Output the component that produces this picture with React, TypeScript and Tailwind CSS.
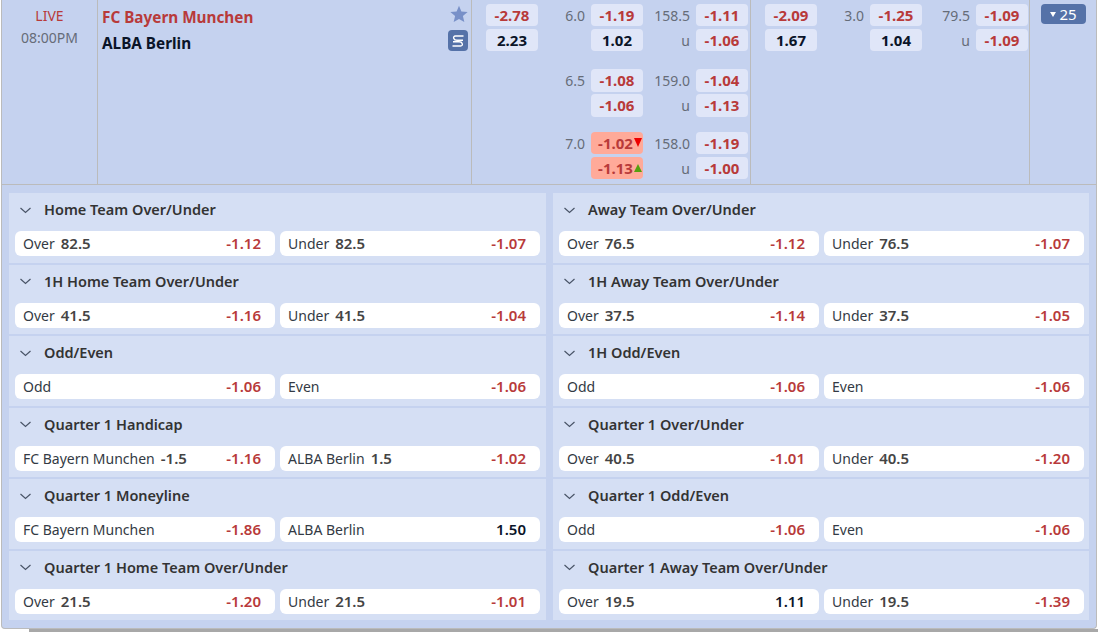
import React from 'react';

function Odd({ v, hot, arrow, tall }: { v: string; hot?: boolean; arrow?: 'up' | 'down'; tall?: boolean }) {
  const neg = v.startsWith('-');
  return (
    <div
      className={`relative flex ${tall ? 'h-[23px]' : 'h-[22px]'} w-[52px] items-center justify-center rounded-[4px] text-[15px] font-bold ${hot ? 'bg-[#ffaa99]' : 'bg-[#e0e6f8]'} ${neg ? 'text-[#b83a3a]' : 'text-[#0a1428]'}`}
    >
      {arrow ? <span className="mr-[3px]">{v}</span> : v}
      {arrow === 'down' && (
        <span className="absolute right-[1px] top-[6px] h-0 w-0 border-x-[4px] border-t-[9px] border-x-transparent border-t-[#ee0000]" />
      )}
      {arrow === 'up' && (
        <span className="absolute right-[1px] top-[7px] h-0 w-0 border-x-[4px] border-b-[8px] border-x-transparent border-b-[#55a010]" />
      )}
    </div>
  );
}

function Line({ label, children, w }: { label: string; children: React.ReactNode; w: string }) {
  return (
    <div className="flex items-center">
      <span className={`${w} pr-[6px] text-right text-[14px] text-[#666c78]`}>{label}</span>
      {children}
    </div>
  );
}

function Pill({ name, line, odd }: { name: string; line?: string; odd: string }) {
  const neg = odd.startsWith('-');
  return (
    <div className="flex h-[25px] flex-1 items-center justify-between rounded-[6px] bg-white pl-[8px] pr-[14px] text-[14px]">
      <span className="text-[#333a44]">
        {name}
        {line && <b className="ml-[6px] text-[15px] font-semibold text-[#444]">{line}</b>}
      </span>
      <span className={`text-[15px] font-semibold ${neg ? 'text-[#b83a3a]' : 'text-[#0a1428]'}`}>{odd}</span>
    </div>
  );
}

type P = [string, string | undefined, string];

function Card({ title, a, b, inset }: { title: string; a: P; b: P; inset?: boolean }) {
  return (
    <div className={`h-[69.5px] bg-[#d5dff4] pl-[6px] ${inset ? 'pr-[6px]' : 'pr-[5px]'}`}>
      <div className="flex h-[38px] items-center pb-[4px] pl-[5px] text-[14.5px] font-semibold text-[#333]">
        <svg width="11" height="7" viewBox="0 0 11 7" className="mr-[13px]" fill="none" stroke="#4a5568" strokeWidth="1.2">
          <path d="M.5 1 L5.500 5.500 L10.500 1" />
        </svg>
        {title}
      </div>
      <div className="flex gap-[5px]">
        <Pill name={a[0]} line={a[1]} odd={a[2]} />
        <Pill name={b[0]} line={b[1]} odd={b[2]} />
      </div>
    </div>
  );
}

const left: { t: string; a: P; b: P }[] = [
  { t: 'Home Team Over/Under', a: ['Over', '82.5', '-1.12'], b: ['Under', '82.5', '-1.07'] },
  { t: '1H Home Team Over/Under', a: ['Over', '41.5', '-1.16'], b: ['Under', '41.5', '-1.04'] },
  { t: 'Odd/Even', a: ['Odd', undefined, '-1.06'], b: ['Even', undefined, '-1.06'] },
  { t: 'Quarter 1 Handicap', a: ['FC Bayern Munchen', '-1.5', '-1.16'], b: ['ALBA Berlin', '1.5', '-1.02'] },
  { t: 'Quarter 1 Moneyline', a: ['FC Bayern Munchen', undefined, '-1.86'], b: ['ALBA Berlin', undefined, '1.50'] },
  { t: 'Quarter 1 Home Team Over/Under', a: ['Over', '21.5', '-1.20'], b: ['Under', '21.5', '-1.01'] },
];
const right: { t: string; a: P; b: P }[] = [
  { t: 'Away Team Over/Under', a: ['Over', '76.5', '-1.12'], b: ['Under', '76.5', '-1.07'] },
  { t: '1H Away Team Over/Under', a: ['Over', '37.5', '-1.14'], b: ['Under', '37.5', '-1.05'] },
  { t: '1H Odd/Even', a: ['Odd', undefined, '-1.06'], b: ['Even', undefined, '-1.06'] },
  { t: 'Quarter 1 Over/Under', a: ['Over', '40.5', '-1.01'], b: ['Under', '40.5', '-1.20'] },
  { t: 'Quarter 1 Odd/Even', a: ['Odd', undefined, '-1.06'], b: ['Even', undefined, '-1.06'] },
  { t: 'Quarter 1 Away Team Over/Under', a: ['Over', '19.5', '1.11'], b: ['Under', '19.5', '-1.39'] },
];

export default function App() {
  return (
    <div className="h-[632px] w-[1098px] overflow-hidden bg-white font-['Noto_Sans',sans-serif]">
      <div className="ml-[1px] h-[629px] w-[1096px] rounded-b-[4px] border-x border-b border-[#bbbbbb] bg-[#c5d2ef]">
        {/* main market row */}
        <div className="flex h-[185px] border-b border-[#bbbbbb]">
          <div className="w-[96px] border-r border-[#bbbbbb] pt-[5px] text-center text-[14px] leading-[22px]">
            <div className="text-[#b83a3a]">LIVE</div>
            <div className="text-[#666c78]">08:00PM</div>
          </div>
          <div className="relative w-[374px] border-r border-[#bbbbbb] pl-[4px] pt-[4px] text-[15.3px] font-bold leading-[26px]">
            <div className="text-[#b83a3a]">FC Bayern Munchen</div>
            <div className="text-[#0a1428]">ALBA Berlin</div>
            <svg className="absolute right-[3px] top-[5px]" width="18" height="18" viewBox="0 0 24 24" fill="#7890c8">
              <path d="M12 1l3.2 7.6 8.3.7-6.3 5.4 1.9 8.1L12 18.5l-7.100 4.300 1.900-8.100L.5 9.300l8.300-.7z" />
            </svg>
            <div className="absolute right-[3px] top-[30px] flex h-[21px] w-[20px] items-center justify-center rounded-[4px] bg-[#5572a8]">
              <svg width="14" height="14" viewBox="0 0 14 14" fill="none" stroke="#fff" strokeWidth="1.400">
                <path d="M12.500 2H4.500C2.800 2 2.300 3.200 2.800 4.500C3.200 5.800 4.500 6.200 6 6.200H12" />
                <path d="M1.500 12H9.500C11.200 12 11.700 10.800 11.200 9.500C10.800 8.200 9.500 7.800 8 7.800H2" />
              </svg>
            </div>
          </div>

          {/* full time */}
          <div className="flex w-[279px] border-r border-[#bbbbbb] pl-[14px] pt-[4px]">
            <div className="flex w-[52px] flex-col gap-[3px]">
              <Odd v="-2.78" />
              <Odd v="2.23" />
            </div>
            <div className="flex flex-col">
              <div className="flex flex-col gap-[3px]">
                <div className="flex">
                  <Line label="6.0" w="w-[53px]"><Odd v="-1.19" /></Line>
                  <Line label="158.5" w="w-[53px]"><Odd v="-1.11" /></Line>
                </div>
                <div className="flex">
                  <Line label="" w="w-[53px]"><Odd v="1.02" /></Line>
                  <Line label="u" w="w-[53px]"><Odd v="-1.06" /></Line>
                </div>
              </div>
              <div className="mt-[18px] flex flex-col gap-[2px]">
                <div className="flex">
                  <Line label="6.5" w="w-[53px]"><Odd v="-1.08" tall /></Line>
                  <Line label="159.0" w="w-[53px]"><Odd v="-1.04" tall /></Line>
                </div>
                <div className="flex">
                  <Line label="" w="w-[53px]"><Odd v="-1.06" tall /></Line>
                  <Line label="u" w="w-[53px]"><Odd v="-1.13" tall /></Line>
                </div>
              </div>
              <div className="mt-[15px] flex flex-col gap-[3px]">
                <div className="flex">
                  <Line label="7.0" w="w-[53px]"><Odd v="-1.02" hot arrow="down" /></Line>
                  <Line label="158.0" w="w-[53px]"><Odd v="-1.19" /></Line>
                </div>
                <div className="flex">
                  <Line label="" w="w-[53px]"><Odd v="-1.13" hot arrow="up" /></Line>
                  <Line label="u" w="w-[53px]"><Odd v="-1.00" /></Line>
                </div>
              </div>
            </div>
          </div>

          {/* first half */}
          <div className="flex w-[279px] border-r border-[#bbbbbb] pl-[14px] pt-[4px]">
            <div className="flex w-[52px] flex-col gap-[3px]">
              <Odd v="-2.09" />
              <Odd v="1.67" />
            </div>
            <div className="flex flex-col gap-[3px]">
              <div className="flex">
                <Line label="3.0" w="w-[53px]"><Odd v="-1.25" /></Line>
                <Line label="79.5" w="w-[54px]"><Odd v="-1.09" /></Line>
              </div>
              <div className="flex">
                <Line label="" w="w-[53px]"><Odd v="1.04" /></Line>
                <Line label="u" w="w-[54px]"><Odd v="-1.09" /></Line>
              </div>
            </div>
          </div>

          <div className="flex-1 pl-[11px] pt-[4px]">
            <div className="flex h-[20px] w-[45px] items-center justify-center gap-[3px] rounded-[4px] bg-[#5572a8] text-[15px] text-white">
              <span className="h-0 w-0 border-x-[3.500px] border-t-[5px] border-x-transparent border-t-white" />
              25
            </div>
          </div>
        </div>

        {/* extra markets */}
        <div className="mt-[8px] flex gap-[7px] pl-[7px]">
          <div className="flex w-[537px] flex-col gap-[2px]">
            {left.map((c) => (
              <Card key={c.t} title={c.t} a={c.a} b={c.b} inset />
            ))}
          </div>
          <div className="flex w-[536px] flex-col gap-[2px]">
            {right.map((c) => (
              <Card key={c.t} title={c.t} a={c.a} b={c.b} />
            ))}
          </div>
        </div>
      </div>
      <div className="ml-[29px] h-[3px] bg-[#a8a8a8]" />
    </div>
  );
}
